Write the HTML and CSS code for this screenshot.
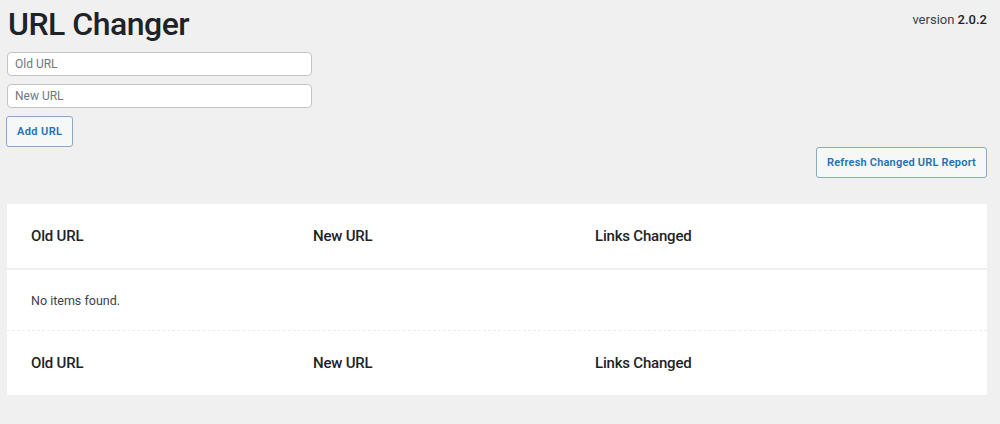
FILE: index.html
```html
<!DOCTYPE html>
<html lang="en">
<head>
<meta charset="utf-8">
<title>URL Changer</title>
<link rel="stylesheet" href="styles.css">
</head>
<body>
<div class="wrap">
  <div class="top">
    <h1 class="title">URL Changer</h1>
    <div class="version">version <strong>2.0.2</strong></div>
  </div>
  <form class="form">
    <input class="field" type="text" placeholder="Old URL">
    <input class="field" type="text" placeholder="New URL">
    <div><button class="btn btn-add" type="button">Add URL</button></div>
  </form>
  <div class="actions">
    <button class="btn" type="button">Refresh Changed URL Report</button>
  </div>
  <div class="card">
    <div class="row head">
      <div class="col c1">Old URL</div>
      <div class="col c2">New URL</div>
      <div class="col c3">Links Changed</div>
    </div>
    <div class="row body">
      <div class="col empty">No items found.</div>
    </div>
    <div class="row foot">
      <div class="col c1">Old URL</div>
      <div class="col c2">New URL</div>
      <div class="col c3">Links Changed</div>
    </div>
  </div>
</div>
</body>
</html>
```

FILE: styles.css
```css
* { box-sizing: border-box; }
html, body {
  margin: 0;
  padding: 0;
  background: #f0f0f0;
  font-family: Roboto, "Noto Sans", "Liberation Sans", sans-serif;
  color: #1d2327;
}
.wrap {
  padding: 0 13px 0 7px;
}
.top {
  display: flex;
  justify-content: space-between;
  align-items: flex-start;
}
.title {
  margin: 0;
  padding-left: 1px;
  font-size: 32px;
  font-weight: 500;
  line-height: 48px;
  letter-spacing: -0.5px;
  color: #1d2327;
}
.version {
  font-size: 13px;
  line-height: 16px;
  margin-top: 12px;
  color: #3c434a;
}
.version strong {
  font-weight: 500;
  color: #1d2327;
}
.form {
  display: flex;
  flex-direction: column;
  gap: 8px;
  margin: 4px 0 0;
}
.field {
  width: 305px;
  height: 24px;
  margin: 0;
  border: 1px solid #c3c4c7;
  border-radius: 4px;
  background: #fff;
  padding: 0 7px;
  font-family: inherit;
  font-size: 12px;
  color: #2c3338;
}
.field::placeholder { color: #72777c; }
.btn {
  height: 31px;
  margin: 0;
  padding: 0 10px;
  border: 1px solid #8aa8c7;
  border-radius: 3px;
  background: #f6f7f7;
  color: #2271b1;
  font-family: inherit;
  font-size: 11px;
  font-weight: 600;
  letter-spacing: 0.2px;
  cursor: pointer;
}
.btn-add {
  margin-left: -1px;
  padding: 0 10px;
  letter-spacing: 0.4px;
}
.actions {
  display: flex;
  justify-content: flex-end;
}
.card {
  margin-top: 26px;
  background: #fff;
}
.row {
  display: flex;
  align-items: center;
  padding: 0 24px;
}
.head {
  height: 66px;
  border-bottom: 2px solid #f0f0f0;
}
.body {
  height: 61px;
  border-bottom: 1px dashed #ececec;
}
.foot {
  height: 64px;
}
.col {
  font-size: 15px;
  font-weight: 500;
  letter-spacing: -0.2px;
  color: #1d2327;
}
.c1, .c2 { width: 282px; }
.c3 { flex: 1; }
.empty {
  font-size: 12.5px;
  font-weight: 400;
  letter-spacing: 0;
  color: #3c434a;
}
```
